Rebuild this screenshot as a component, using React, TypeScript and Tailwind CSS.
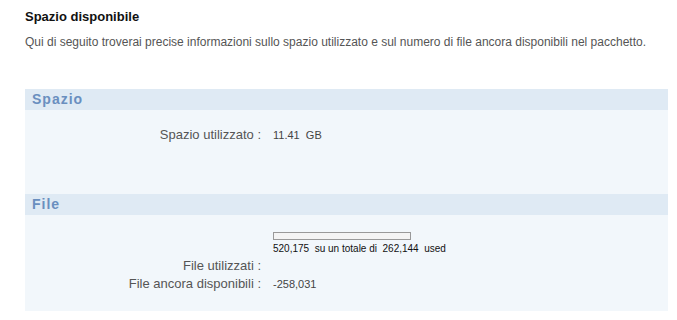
export default function App() {
  return (
    <div className="w-[677px] h-[320px] bg-white font-['Liberation_Sans',Arial,sans-serif] overflow-hidden">
      <div className="pl-[25px] pr-[9px] pt-[9px]">
        <h1 className="text-[13px] leading-[16px] font-bold text-[#111]">Spazio disponibile</h1>
        <p className="mt-[10px] text-[12px] leading-[14px] text-[#555]">
          Qui di seguito troverai precise informazioni sullo spazio utilizzato e sul numero di file ancora disponibili nel pacchetto.
        </p>

        {/* Spazio */}
        <div className="mt-[40px]">
          <div className="h-[21px] bg-[#dfeaf4] pl-[7px] flex items-center text-[14px] font-bold tracking-[1px] text-[#6a8fbf]">
            Spazio
          </div>
          <div className="h-[84px] bg-[#f2f7fb] pt-[15px]">
            <div className="flex items-center">
              <div className="w-[236px] text-right text-[13px] text-[#555]">Spazio utilizzato :</div>
              <div className="pl-[12px] text-[11px] text-[#444]">11.41&nbsp;&nbsp;GB</div>
            </div>
          </div>
        </div>

        {/* File */}
        <div>
          <div className="h-[21px] bg-[#dfeaf4] pl-[7px] flex items-center text-[14px] font-bold tracking-[1px] text-[#6a8fbf]">
            File
          </div>
          <div className="h-[96px] bg-[#f2f7fb] pt-[17px]">
            <div className="flex">
              <div className="w-[236px]" />
              <div className="pl-[12px]">
                <div className="w-[138px] h-[8px] border border-[#999] bg-[#f4f4f4]" />
                <div className="mt-[3px] text-[10px] leading-[12px] text-[#111]">
                  520,175&nbsp; su un totale di&nbsp; 262,144&nbsp; used
                </div>
              </div>
            </div>
            <div className="flex items-center mt-[3px]">
              <div className="w-[236px] text-right text-[13px] leading-[16px] text-[#555]">File utilizzati :</div>
            </div>
            <div className="flex items-center mt-[2px]">
              <div className="w-[236px] text-right text-[13px] leading-[16px] text-[#555]">File ancora disponibili :</div>
              <div className="pl-[12px] text-[11px] text-[#444]">-258,031</div>
            </div>
          </div>
        </div>
      </div>
    </div>
  );
}
